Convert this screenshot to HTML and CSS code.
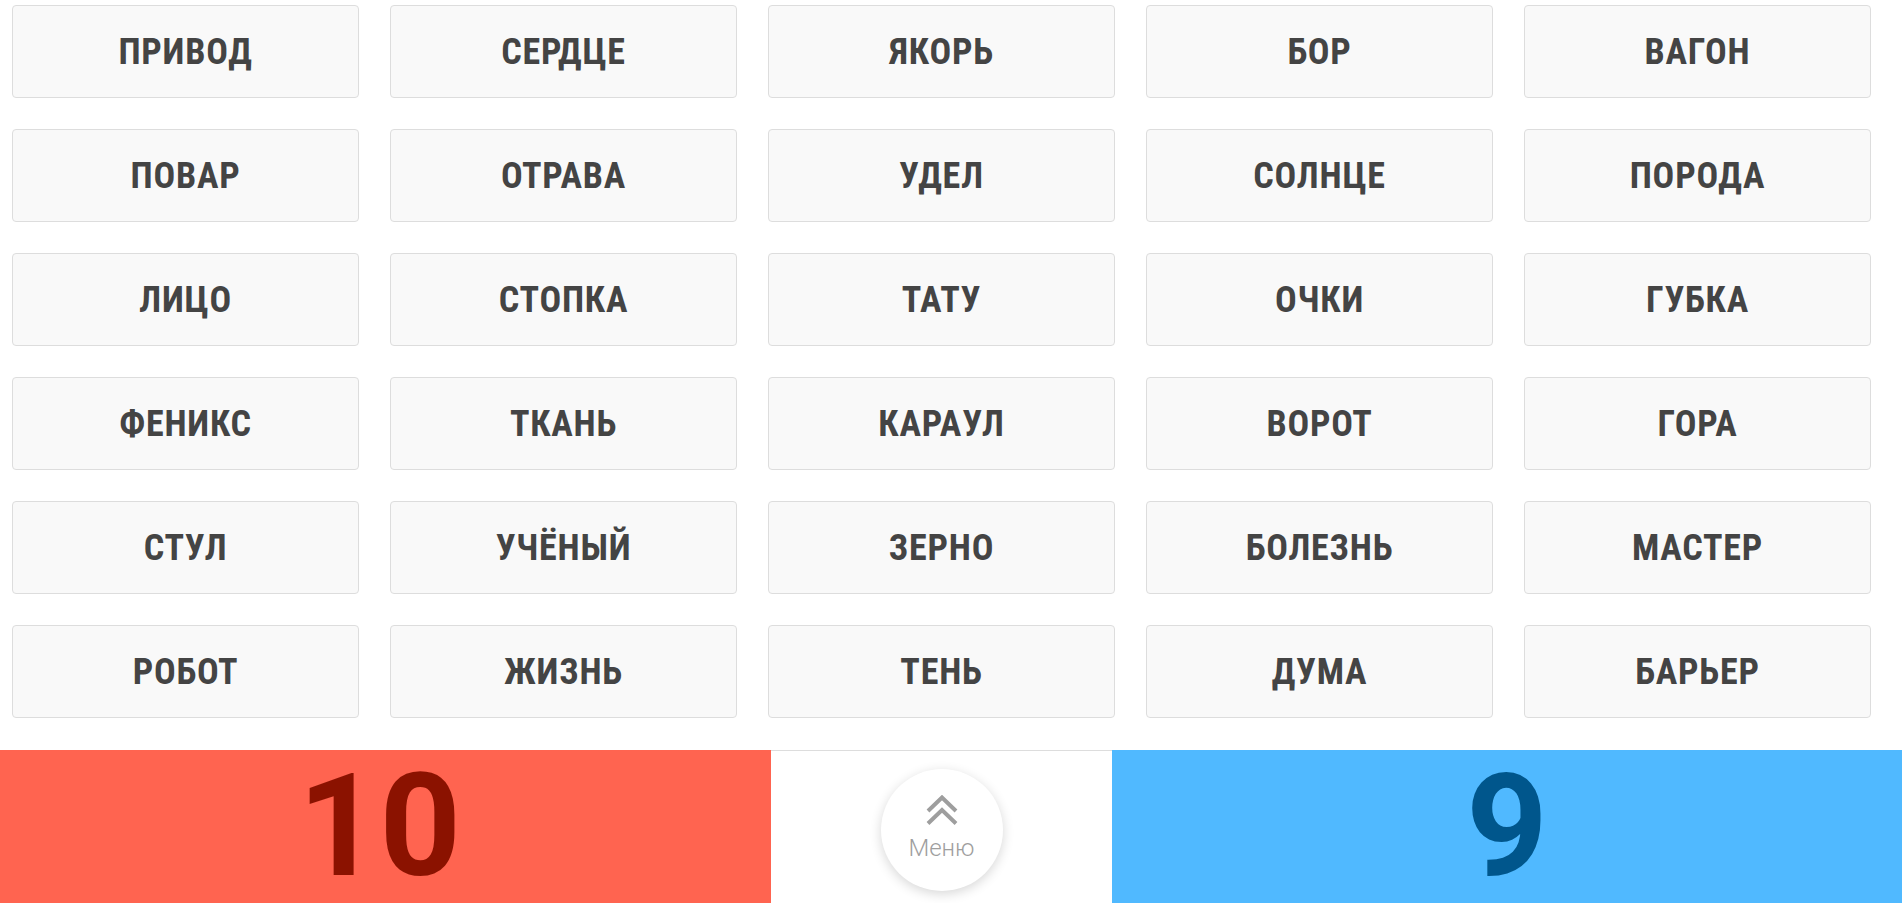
FILE: index.html
```html
<!DOCTYPE html>
<html lang="ru">
<head>
<meta charset="utf-8">
<title>Кодовые имена</title>
<link rel="stylesheet" href="styles.css">
</head>
<body>
<div class="board">
  <div class="card">ПРИВОД</div>
  <div class="card">СЕРДЦЕ</div>
  <div class="card">ЯКОРЬ</div>
  <div class="card">БОР</div>
  <div class="card">ВАГОН</div>
  <div class="card">ПОВАР</div>
  <div class="card">ОТРАВА</div>
  <div class="card">УДЕЛ</div>
  <div class="card">СОЛНЦЕ</div>
  <div class="card">ПОРОДА</div>
  <div class="card">ЛИЦО</div>
  <div class="card">СТОПКА</div>
  <div class="card">ТАТУ</div>
  <div class="card">ОЧКИ</div>
  <div class="card">ГУБКА</div>
  <div class="card">ФЕНИКС</div>
  <div class="card">ТКАНЬ</div>
  <div class="card">КАРАУЛ</div>
  <div class="card">ВОРОТ</div>
  <div class="card">ГОРА</div>
  <div class="card">СТУЛ</div>
  <div class="card">УЧЁНЫЙ</div>
  <div class="card">ЗЕРНО</div>
  <div class="card">БОЛЕЗНЬ</div>
  <div class="card">МАСТЕР</div>
  <div class="card">РОБОТ</div>
  <div class="card">ЖИЗНЬ</div>
  <div class="card">ТЕНЬ</div>
  <div class="card">ДУМА</div>
  <div class="card">БАРЬЕР</div>
</div>
<div class="scorebar">
  <div class="score score-red">10</div>
  <div class="middle">
    <button class="menu-btn" type="button">
      <svg class="chev" viewBox="0 0 32 31" width="32" height="31" aria-hidden="true">
        <path d="M2 16 L16 2.5 L30 16" fill="none" stroke="#9e9e9e" stroke-width="4"/>
        <path d="M2 28.5 L16 15 L30 28.5" fill="none" stroke="#9e9e9e" stroke-width="4"/>
      </svg>
      <span class="menu-label">Меню</span>
    </button>
  </div>
  <div class="score score-blue">9</div>
</div>
</body>
</html>
```

FILE: styles.css
```css
html, body {
  margin: 0;
  padding: 0;
  background: #ffffff;
  overflow: hidden;
}

body {
  font-family: Roboto, "Liberation Sans", sans-serif;
}

.board {
  display: grid;
  grid-template-columns: repeat(5, 347px);
  grid-auto-rows: 93px;
  column-gap: 31px;
  row-gap: 31px;
  padding: 5px 31px 0 12px;
}

.card {
  box-sizing: border-box;
  display: flex;
  align-items: center;
  justify-content: center;
  background: #f9f9f9;
  border: 1px solid #dddddd;
  border-radius: 4px;
  color: #444444;
  font-family: Roboto, "Liberation Sans", sans-serif;
  font-weight: 700;
  font-stretch: 85%;
  font-size: 36px;
  letter-spacing: 0.8px;
}

.scorebar {
  display: flex;
  height: 153px;
  margin-top: 32px;
}

.score {
  display: flex;
  align-items: center;
  justify-content: center;
  box-sizing: border-box;
  font-family: Roboto, "Liberation Sans", sans-serif;
  font-weight: 700;
  font-stretch: 89%;
  font-size: 142px;
  line-height: 1;
}

.score-red {
  width: 771px;
  padding-right: 12px;
  background: #ff6450;
  color: #8b1200;
}

.score-blue {
  flex: 1;
  background: #50b9ff;
  color: #00568c;
}

.middle {
  width: 341px;
  box-sizing: border-box;
  border-top: 1px solid #dddddd;
  display: flex;
  justify-content: center;
  align-items: flex-start;
}

.menu-btn {
  margin-top: 18px;
  width: 122px;
  height: 122px;
  border-radius: 50%;
  border: none;
  background: #ffffff;
  box-shadow: 0 3px 12px rgba(0, 0, 0, 0.16);
  display: flex;
  flex-direction: column;
  align-items: center;
  padding: 26px 0 0 0;
  box-sizing: border-box;
}

.chev {
  display: block;
}

.menu-label {
  margin-top: 10px;
  font-family: Roboto, "Liberation Sans", sans-serif;
  font-weight: 300;
  font-size: 24px;
  line-height: 1;
  color: #9e9e9e;
}
```
